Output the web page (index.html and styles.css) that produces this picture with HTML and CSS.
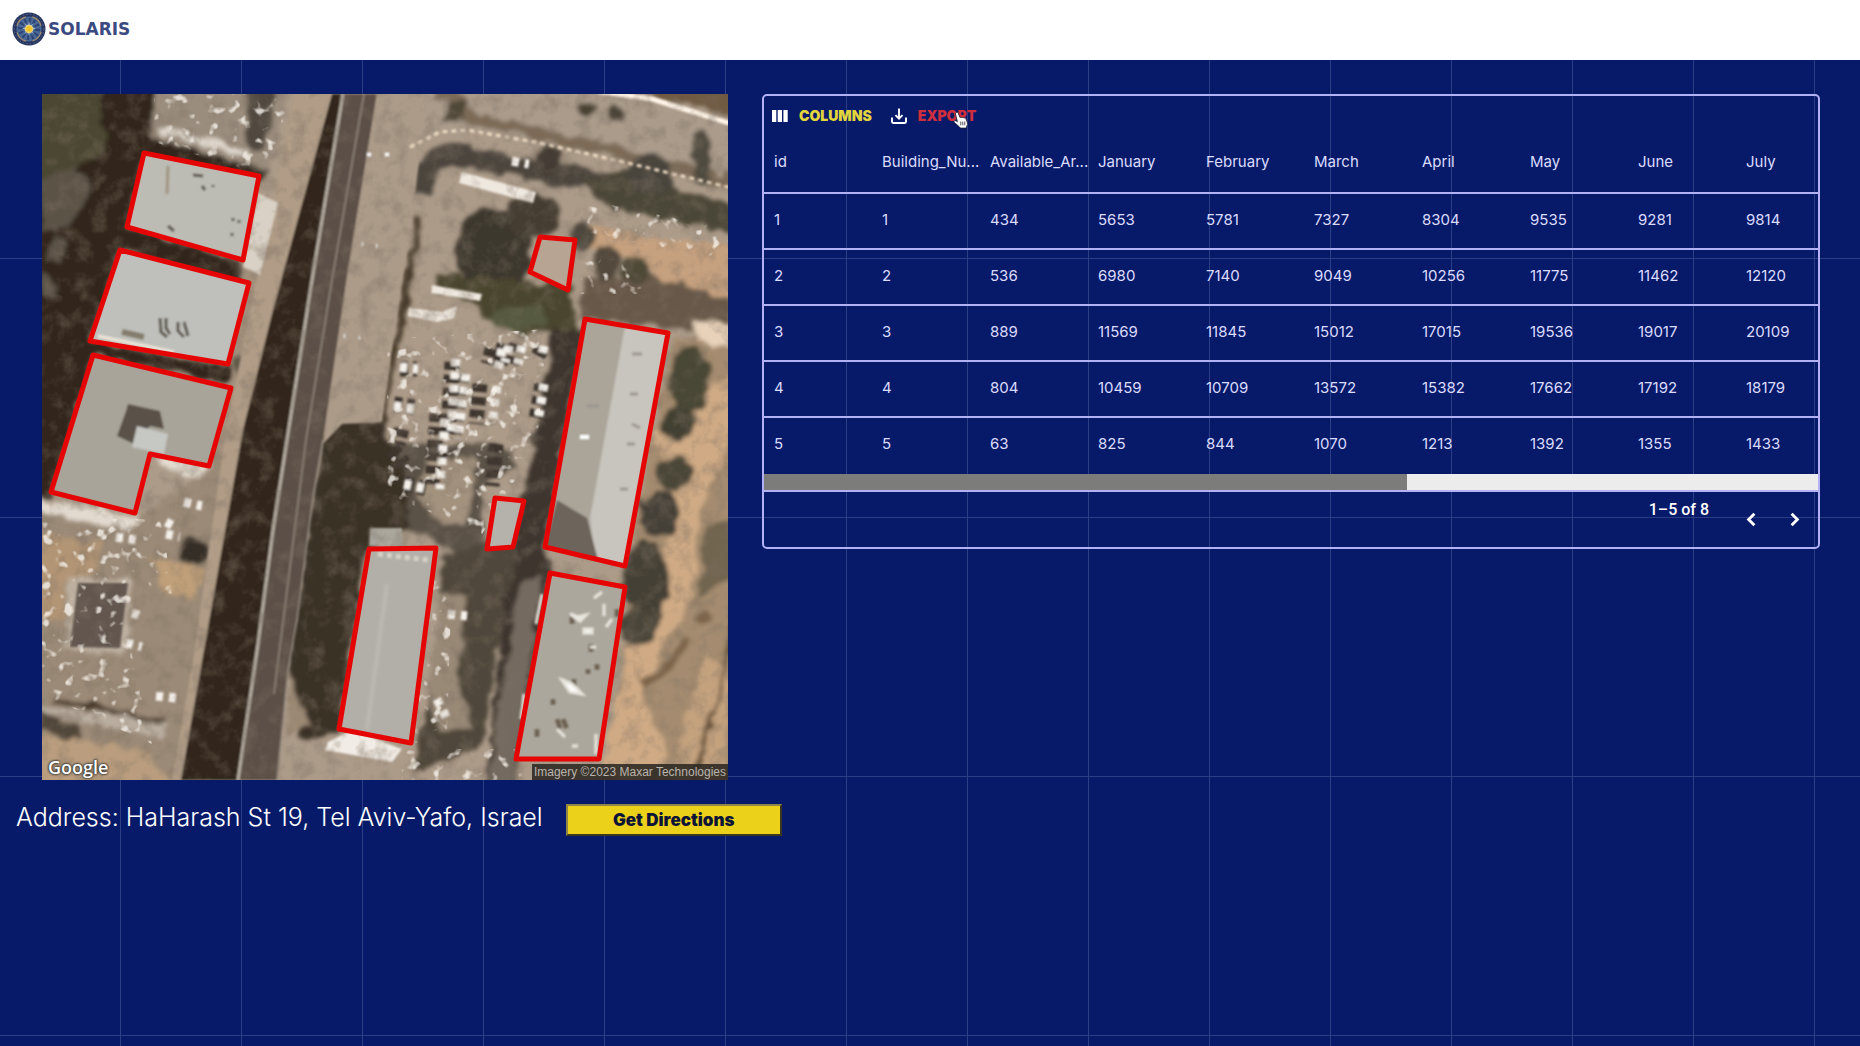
FILE: index.html
```html
<!DOCTYPE html>
<html lang="en">
<head>
<meta charset="utf-8">
<title>Solaris</title>
<link rel="stylesheet" href="styles.css">
</head>
<body>
<header class="topbar">
  <a class="brand" href="#">
    <svg class="brand-mark" viewBox="0 0 34 34" aria-hidden="true">
      <circle cx="17" cy="17" r="16.5" fill="#25355f"/>
      <circle cx="17" cy="17" r="12.5" fill="#4a6795" stroke="#a98f6b" stroke-width="1.2" stroke-dasharray="13 6.6" stroke-dashoffset="-3"/>
      <circle cx="17" cy="17" r="14.8" fill="none" stroke="#5a6c92" stroke-width="1" stroke-dasharray="1.5 2"/>
      <circle cx="17" cy="17" r="8.5" fill="none" stroke="#2c4475" stroke-width="5" stroke-dasharray="2 2.4"/>
      <path d="M17 9l1 5 4-3-3 4 5 1.500-5 1.500 3 4-4-3-1 5-1-5-4 3 3-4-5-1.500 5-1.500-3-4 4 3z" fill="#9fb6cc"/>
      <circle cx="17" cy="17" r="4.300" fill="#e8d27a"/>
      <circle cx="17" cy="17" r="2.800" fill="#f0c320"/>
    </svg>
    <span class="brand-name">SOLARIS</span>
  </a>
</header>
<main class="content">
  <section class="map">
    <svg class="map-image" viewBox="0 0 686 686" role="img" aria-label="Satellite view of the buildings">
      <defs>
        <filter id="rough" x="0" y="0" width="100%" height="100%">
          <feTurbulence type="fractalNoise" baseFrequency="0.06" numOctaves="3" seed="4" result="n"/>
          <feDisplacementMap in="SourceGraphic" in2="n" scale="14" xChannelSelector="R" yChannelSelector="G"/>
          <feGaussianBlur stdDeviation="2"/>
        </filter>
        <filter id="soft" x="0" y="0" width="100%" height="100%"><feGaussianBlur stdDeviation="1"/></filter>
        <filter id="grain" x="0" y="0" width="100%" height="100%">
          <feTurbulence type="fractalNoise" baseFrequency="0.06" numOctaves="4" seed="9"/>
          <feColorMatrix values="0 0 0 0 0.2  0 0 0 0 0.16  0 0 0 0 0.12  2.4 0 0 0 -1.100"/>
        </filter>
        <filter id="glint" x="0" y="0" width="100%" height="100%">
          <feTurbulence type="fractalNoise" baseFrequency="0.09" numOctaves="2" seed="21"/>
          <feColorMatrix values="0 0 0 0 0.93  0 0 0 0 0.89  0 0 0 0 0.83  6 0 0 0 -3.600"/>
          <feGaussianBlur stdDeviation="0.700"/>
        </filter>
        <clipPath id="glint-area"><path d="M112 0H248L226 82 112 48ZM345 245L505 235 495 350 440 440 345 400ZM0 425H120L130 500 90 490 90 560 110 650 0 600ZM540 105L686 135 686 165 545 140ZM538 165H600V200H538ZM375 480H410L405 640 370 650ZM360 655H480V686H360Z"/></clipPath>
      </defs>
      <rect width="686" height="686" fill="#ac9b89"/>
      <g filter="url(#rough)">
        <path d="M-9 -9H70L62 60 -9 120Z" fill="#4b4731"/>
        <path d="M62 -9H114L108 44 230 75 215 90 102 62 85 133 205 170 195 190 78 156 48 247 190 274 188 290 51 261 9 400 -9 405V112L40 70 62 60Z" fill="#30271f"/>
        <path d="M0 85L34 70 50 95 30 130 0 140ZM8 145L24 150 20 170 5 165ZM0 180L18 190 12 205 0 200Z" fill="#5c5247"/>
        <path d="M112 -9H250L228 76 108 44Z" fill="#9b8d7e"/>
        <path d="M205 -9H235L222 60 203 55Z" fill="#514940"/>
        <path d="M118 38L165 47 205 60" stroke="#ded6cb" stroke-width="7" fill="none"/>
        <path d="M200 168L235 108 218 181 198 330 170 400 165 372 190 294Z" fill="#a28f7b"/>
        <circle cx="220" cy="262" r="20" fill="#4f4a3b"/><circle cx="206" cy="272" r="14" fill="#5d5445"/>
        <path d="M95 425L170 375 200 340 145 686H-9V410Z" fill="#9b8a77"/>
        <path d="M110 465L160 475 150 505 125 500Z" fill="#bf9f79"/>
        <path d="M-9 440L60 450 50 480 25 490 20 530 -9 520Z" fill="#b29575"/>
        <circle cx="152" cy="457" r="15" fill="#342d25"/>
        <path d="M112 360L167 372 158 386 120 372Z" fill="#e4dbd0"/>
        <path d="M-4 404L98 424 88 438 -4 416Z" fill="#e2dacf"/>
        <path d="M28 484L92 484 82 562 22 556Z" fill="#bdb0a0"/>
        <path d="M-4 610L125 630 120 645 -4 618Z" fill="#b9ada0"/>
        <path d="M10 604L120 628" stroke="#4a3b2b" stroke-width="6"/>
        <path d="M-4 616L42 634 38 650 -4 634Z" fill="#51473a"/>
        <path d="M-4 640L100 655 135 695H-4Z" fill="#b99d7e"/>
        <path d="M355 -9H555L700 30V100L500 48 400 36 360 60Z" fill="#aa9b8b"/>
        <path d="M560 -9H695V22Z" fill="#705a42"/>
        <path d="M390 0H410L425 22 560 55 700 92" stroke="#7b6b57" stroke-width="13" fill="none"/>
        <path d="M378 100Q380 70 410 58L500 78 560 85 690 130" stroke="#4c453c" stroke-width="20" fill="none"/>
        <path d="M540 85L600 72 630 95 690 110V140L560 112Z" fill="#4c4738"/>
        <circle cx="608" cy="80" r="21" fill="#49453c"/><ellipse cx="660" cy="62" rx="10" ry="27" fill="#504b40"/>
        <circle cx="506" cy="66" r="13" fill="#443e34"/><circle cx="544" cy="15" r="8" fill="#494233"/><circle cx="573" cy="20" r="8" fill="#4b4438"/>
        <path d="M408 8L425 8 423 28 400 28Z" fill="#4f4637"/>
        <path d="M540 130L620 145 690 150V210L620 195 600 168 550 155Z" fill="#c6a17f"/>
        <path d="M538 185L600 180 690 205V240L538 225Z" fill="#685949"/>
        <ellipse cx="451" cy="158" rx="38" ry="44" fill="#3d372f"/>
        <ellipse cx="492" cy="123" rx="27" ry="22" fill="#443c33"/>
        <circle cx="540" cy="142" r="13" fill="#4d463c"/>
        <path d="M395 180L470 185 530 195 535 235 480 240 440 225 430 205 392 198Z" fill="#48442f"/>
        <ellipse cx="478" cy="224" rx="30" ry="12" fill="#575a40"/>
        <ellipse cx="565" cy="168" rx="12" ry="18" fill="#524a3e"/><ellipse cx="592" cy="175" rx="14" ry="14" fill="#4f4839"/>
        <path d="M378 119L356 240 338 330" stroke="#463a2c" stroke-width="7" fill="none"/>
        <path d="M630 245H695V695H555L583 560 585 472Z" fill="#a58c6f"/>
        <path d="M655 300L695 280V340L660 410 650 500 600 600 625 660 590 695 560 670 590 540 625 480 630 380 610 340Z" fill="#cfaa85"/>
        <path d="M650 228L695 232V254L655 248Z" fill="#e8d2ba"/>
        <ellipse cx="647" cy="285" rx="20" ry="34" fill="#484735"/><circle cx="636" cy="330" r="17" fill="#424031"/><ellipse cx="632" cy="380" rx="18" ry="17" fill="#4b4739"/>
        <ellipse cx="618" cy="420" rx="20" ry="24" fill="#454137"/><ellipse cx="604" cy="488" rx="23" ry="42" fill="#454135"/><circle cx="597" cy="532" r="19" fill="#4a4537"/>
        <path d="M665 430L695 425V480L655 505Z" fill="#716550"/>
        <path d="M640 640L665 560 690 590 680 695H630Z" fill="#c4a27e"/>
        <path d="M695 520L670 620 650 690" stroke="#66513a" stroke-width="4" fill="none"/>
        <path d="M600 590L625 575 645 545M655 530L668 520" stroke="#7b6449" stroke-width="10" fill="none"/>
        <path d="M512 235H542L503 453 508 479 472 690H445L465 470 490 360Z" fill="#3e362d"/>
        <path d="M478 490L500 480 470 695H446Z" fill="#746b60"/>
        <path d="M343 350L368 435 405 455 440 470 440 390 480 370 455 350 400 350Z" fill="#5a5147"/>
        <path d="M385 365L435 365 425 430 400 430 375 400Z" fill="#a3927e"/>
        <path d="M400 460L480 440 465 500 440 650 370 680 395 570Z" fill="#50473b"/>
        <path d="M398 500L425 500 415 580 430 635 395 635 385 590Z" fill="#998977"/>
        <path d="M281 346L300 325 340 330 365 385 368 435 325 455 297 635 262 645 245 576 270 403Z" fill="#3a3027"/>
        <path d="M246 576L268 630 244 645Z" fill="#9c8975"/>
      </g>
      <g filter="url(#soft)">
        <path d="M252 0H290L201 336 141 686H130L152 560 184 336Z" fill="#b09c87"/>
        <path d="M290 0H301L270 186 245 346 231 436 198 686H139L201 336 230 220Z" fill="#30271f"/>
        <path d="M301 0H335L305 183 281 346 271 403 255 526 246 576 235 686H196L231 436 245 346 270 186Z" fill="#5b5046"/>
        <path d="M335 0H385L372 110 352 240 340 328 300 330 281 350 305 183Z" fill="#ac9b89"/>
        <path d="M301 0L270 186 245 346 231 436 216 550 196 686" fill="none" stroke="#b9b0a5" stroke-width="3"/>
        <path d="M281 346L271 403 255 526 246 576 235 686M322 0L290 186 264 346 232 600" fill="none" stroke="#94897e" stroke-width="1.500"/>
        <path d="M555 -3L610 5 690 30" stroke="#fff4e8" stroke-width="5" fill="none"/>
        <path d="M368 53L398 38 425 36 498 49 590 70 690 94" stroke="#efdcc5" stroke-width="3" stroke-dasharray="5 4" fill="none"/>
        <path d="M420 78L494 98 491 109 417 89ZM367 214L400 218 415 212 412 224 395 228 366 222ZM390 191L440 200 438 207 389 199Z" fill="#efe8df"/>
        <path d="M216 99L236 109 218 181 201 173Z" fill="#d9d1c5"/>
        <path d="M286 648L310 636 360 655 350 668 283 656Z" fill="#f1ece5"/>
        <path d="M36 489H86L78 554 28 553Z" fill="#625750"/>
        <path d="M328 434H360V452H327Z" fill="#aaa79e"/>
        <path d="M327 62v-3M345 62v-3M320 150h1M334 152h1M302 242h1M317 244h1" stroke="#fff" stroke-width="4"/>
        <path d="M358 275L375 275M352 310L372 313M410 268L406 340M420 280L412 345M438 290L434 330M450 255L446 270M462 250L458 272M475 250L470 270M395 320L390 390M500 255L494 265M500 290L494 325M360 335L356 350M350 355L362 370M363 390L385 395M397 360L410 362M454 350L450 392" stroke="#3d352d" stroke-width="15" stroke-dasharray="8 5" fill="none"/>
        <path d="M358 273L376 275M352 312L372 315M414 265L409 342M424 280L416 345M455 292L450 330M467 252L463 268M480 252L476 270M502 252L499 265M502 290L497 322M403 325L398 395M362 390L385 395M460 255L456 275M142 408L160 412M74 443L94 446M124 428L135 434M124 440L138 443M114 602L134 604M84 549L100 553M90 519L102 523M470 67L487 70M406 520L425 522M395 605L405 625" stroke="#f4f0ea" stroke-width="9" stroke-dasharray="7 6" fill="none"/>
      </g>
      <rect width="686" height="686" filter="url(#grain)" opacity="0.450"/>
      <g clip-path="url(#glint-area)"><rect width="686" height="686" filter="url(#glint)" opacity="0.800"/></g>
      <g filter="url(#soft)">
        <path d="M102 59L217 82 201 166 85 133Z" fill="#bcbbb4"/>
        <path d="M78 156L207 189 186 270 48 247Z" fill="#bfc0bb"/>
        <path d="M51 261L189 294 167 372 108 360 93 419 9 398Z" fill="#a9a499"/>
        <path d="M498 143L533 146 526 196 488 178Z" fill="#b8a493"/>
        <path d="M543 225L626 239 583 472 503 453Z" fill="#c8c5be"/>
        <path d="M543 225L583 232 548 424 553 466 503 453Z" fill="#aaa499"/>
        <path d="M515 406L545 424 556 466 503 453Z" fill="#6d655b"/>
        <path d="M453 404L482 407 471 453 445 455Z" fill="#b5b2ab"/>
        <path d="M327 455L394 454 369 649 297 635Z" fill="#b1afa7"/>
        <path d="M345 490L325 636" stroke="#b9b7b0" stroke-width="5"/>
        <path d="M508 479L583 493 557 665 474 665Z" fill="#aca79c"/>
        <path d="M84 317L86 310 118 317 122 335 108 332 92 350 75 342Z" fill="#5a5148"/>
        <path d="M95 332L126 340 122 360 90 353Z" fill="#c6c8c4"/>
        <path d="M118 224l1 14 6 5M124 224v10l4 6M136 228v9l6 6M142 228l4 14M151 81l10 1M160 92l3 4M171 91v2M191 124v3M197 126v3M190 139v3M126 132l6 5" stroke="#5b554c" stroke-width="3" fill="none"/>
        <path d="M126 72L125 100" stroke="#a09482" stroke-width="3"/>
        <path d="M80 238L102 243" stroke="#847c6c" stroke-width="6"/>
        <path d="M56 242L132 258" stroke="#eee6d9" stroke-width="3"/>
        <path d="M530 520v12M549 550v8M555 570v6M511 605v6M546 575v5M515 625l4 12M521 625l4 10M575 515v8M495 635v8M532 585v6" stroke="#6e6252" stroke-width="5" stroke-dasharray="10 3"/>
        <path d="M520 586L530 590 540 600 528 598ZM528 520l8 3 8-2-6 6ZM542 535h8v4h-8ZM560 498l-8 6M562 510v12M548 553h6M515 635l8 8M530 652h6M570 525l-6 8M500 500l-6 30M482 600l-3 25M554 640v20" fill="#fff" stroke="#e7e5dd" stroke-width="3"/>
        <path d="M336 460L386 466" stroke="#d8d2c8" stroke-width="5" stroke-dasharray="5 4"/>
        <path d="M590 260h10M588 300h8M585 350h8M578 395h8M545 312h12M590 330l8 4" stroke="#9b978f" stroke-width="3"/>
        <path d="M538 343h9" stroke="#fff" stroke-width="4"/>
      </g>
      <g fill="none" stroke="#e60505" stroke-width="5" stroke-linejoin="round">
        <path d="M102 59L217 82 201 166 85 133Z"/>
        <path d="M78 156L207 189 186 270 48 247Z"/>
        <path d="M51 261L189 294 167 372 108 360 93 419 9 398Z"/>
        <path d="M498 143L533 146 526 196 488 178Z"/>
        <path d="M543 225L626 239 583 472 503 453Z"/>
        <path d="M453 404L482 407 471 453 445 455Z"/>
        <path d="M327 455L394 454 369 649 297 635Z"/>
        <path d="M508 479L583 493 557 665 474 665Z"/>
      </g>
    </svg>
    <span class="map-logo">Google</span>
    <span class="map-credit">Imagery ©2023 Maxar Technologies</span>
  </section>

  <section class="grid-panel">
    <div class="toolbar">
      <button class="tool" type="button">
        <svg class="tool-icon" viewBox="0 0 18 18" aria-hidden="true"><path d="M1 3h4.300v12H1zM6.700 3H11v12H6.700zM12.400 3h4.300v12h-4.300z" fill="#fff"/></svg>
        COLUMNS
      </button>
      <button class="tool tool-hover" type="button">
        <svg class="tool-icon" viewBox="0 0 18 18" aria-hidden="true"><path d="M9 1.500v10M5.500 8.200L9 11.700l3.500-3.500M2 10.500v4.300q0 1.200 1.200 1.200h11.600q1.200 0 1.200-1.200v-4.300" fill="none" stroke="#fff" stroke-width="1.900"/></svg>
        EXPORT
        <svg class="pointer" viewBox="0 0 16 18" aria-hidden="true"><path d="M3 1.500q1.500-1 2.200.6L7 6.500q1-.8 1.900.1 1.200-.7 2 .3 1.400-.5 2 .8l1.500 4q.6 2-.6 3.400l-.6 2H7.500L6 15.500l-4.600-4q-.9-1.300.4-1.900 1-.3 2.600 1.100L2.500 3q-.3-1 .5-1.500z" fill="#fff" stroke="#1b1b2c" stroke-width=".8"/><path d="M7.800 10.500v3.800M9.800 10.500v3.800M11.800 10.500v3.800" stroke="#444" stroke-width=".9"/></svg>
      </button>
    </div>
    <div class="table-wrap">
      <table class="data">
        <thead>
          <tr><th>id</th><th>Building_Nu...</th><th>Available_Ar...</th><th>January</th><th>February</th><th>March</th><th>April</th><th>May</th><th>June</th><th>July</th></tr>
        </thead>
        <tbody>
          <tr><td>1</td><td>1</td><td>434</td><td>5653</td><td>5781</td><td>7327</td><td>8304</td><td>9535</td><td>9281</td><td>9814</td></tr>
          <tr><td>2</td><td>2</td><td>536</td><td>6980</td><td>7140</td><td>9049</td><td>10256</td><td>11775</td><td>11462</td><td>12120</td></tr>
          <tr><td>3</td><td>3</td><td>889</td><td>11569</td><td>11845</td><td>15012</td><td>17015</td><td>19536</td><td>19017</td><td>20109</td></tr>
          <tr><td>4</td><td>4</td><td>804</td><td>10459</td><td>10709</td><td>13572</td><td>15382</td><td>17662</td><td>17192</td><td>18179</td></tr>
          <tr><td>5</td><td>5</td><td>63</td><td>825</td><td>844</td><td>1070</td><td>1213</td><td>1392</td><td>1355</td><td>1433</td></tr>
        </tbody>
      </table>
    </div>
    <div class="scroll-track"><div class="scroll-thumb"></div></div>
    <div class="pager">
      <span class="pager-text">1–5 of 8</span>
      <button class="pager-btn" type="button" aria-label="Previous page"><svg viewBox="0 0 24 24"><path d="M15 6l-6 6 6 6" fill="none" stroke="#fff" stroke-width="3"/></svg></button>
      <button class="pager-btn" type="button" aria-label="Next page"><svg viewBox="0 0 24 24"><path d="M9 6l6 6-6 6" fill="none" stroke="#fff" stroke-width="3"/></svg></button>
    </div>
  </section>
</main>
<section class="address">
  <p class="address-text">Address: HaHarash St 19, Tel Aviv-Yafo, Israel</p>
  <button class="directions" type="button">Get Directions</button>
</section>
</body>
</html>
```
FILE: styles.css
```css
* { box-sizing: border-box; }

html { min-height: 100%; }

body {
  margin: 0;
  min-height: 100vh;
  font-family: Inter, "Liberation Sans", sans-serif;
  color: #fff;
  background-color: #061a69;
  background-image:
    linear-gradient(90deg, #2c3f85 1px, transparent 1px),
    linear-gradient(#2c3f85 1px, transparent 1px);
  background-size: 121px 259px;
  background-position: -1px -1px;
}

button { font: inherit; color: inherit; cursor: pointer; }

.topbar {
  display: flex;
  align-items: center;
  height: 60px;
  padding: 0 12px 2px;
  background: #fff;
}

.brand {
  display: flex;
  align-items: center;
  gap: 2px;
  text-decoration: none;
  color: #3b4a80;
}

.brand-mark { width: 34px; height: 34px; }

.brand-name {
  font: bold 17px/20px "DejaVu Sans", sans-serif;
}

.content {
  display: grid;
  grid-template-columns: 686fr 1058fr;
  gap: 34px;
  align-items: start;
  padding: 34px 40px 0 42px;
}

.map {
  position: relative;
  line-height: 0;
  overflow: hidden;
}

.map-image { display: block; width: 100%; height: auto; }

.map-logo {
  position: absolute;
  left: 6px;
  bottom: 2px;
  font: 600 18px/22px "Open Sans", sans-serif;
  color: #fff;
  text-shadow: 0 0 2px #333, 0 0 2px #333, 0 0 3px #333;
}

.map-credit {
  position: absolute;
  right: 0;
  bottom: 0;
  padding: 0 2px;
  font: 12px/16px "Liberation Sans", sans-serif;
  color: #b9b4ad;
  background: rgba(40, 36, 32, 0.85);
}

.grid-panel {
  min-width: 0;
  border: 2px solid #b3b0f5;
  border-radius: 5px;
}

.toolbar {
  display: flex;
  gap: 18px;
  height: 39px;
  padding: 0 7px;
}

.tool {
  position: relative;
  display: flex;
  align-items: center;
  gap: 10px;
  padding: 0;
  border: 0;
  background: none;
  font-size: 14px;
  font-weight: 900;
  color: #e3d63c;
}

.tool-hover { color: #cf2f3c; }

.tool-icon { width: 18px; height: 18px; }

.pointer {
  position: absolute;
  right: 7px;
  bottom: 6px;
  width: 16px;
  height: 18px;
}

.table-wrap { overflow: hidden; }

.data {
  width: 1080px;
  table-layout: fixed;
  border-collapse: collapse;
}

.data th,
.data td {
  height: 56px;
  padding: 0 0 4px 10px;
  text-align: left;
  font-size: 15px;
  font-weight: 400;
  color: #dcdcff;
  white-space: nowrap;
}

.data th { height: 58px; }

.data tr { border-bottom: 2px solid #b3b0f5; }

.data tbody tr:last-child { border-bottom: 0; }

.scroll-track {
  height: 18px;
  margin-top: 1px;
  background: #ececec;
  border-bottom: 2px solid #b3b0f5;
}

.scroll-thumb {
  width: 61%;
  height: 100%;
  background: #7c7d7b;
}

.pager {
  display: flex;
  justify-content: flex-end;
  gap: 20px;
  height: 55px;
  padding: 8px 12px 0 0;
}

.pager-text {
  margin-right: 11px;
  font: 500 16px/20px Roboto, sans-serif;
}

.pager-btn {
  display: flex;
  align-items: center;
  width: 23px;
  height: 38px;
  padding: 0;
  border: 0;
  background: none;
}

.pager-btn svg { width: 23px; height: 23px; }

.address {
  display: flex;
  align-items: center;
  gap: 23px;
  padding: 18px 16px;
}

.address-text {
  margin: 0;
  font-size: 25px;
  font-weight: 300;
  line-height: 36px;
}

.directions {
  width: 216px;
  height: 32px;
  margin-top: 6px;
  padding: 0;
  border: 2px outset #8f8648;
  background: #ecd11b;
  font-size: 17px;
  font-weight: 900;
  color: #0d1536;
}
```
